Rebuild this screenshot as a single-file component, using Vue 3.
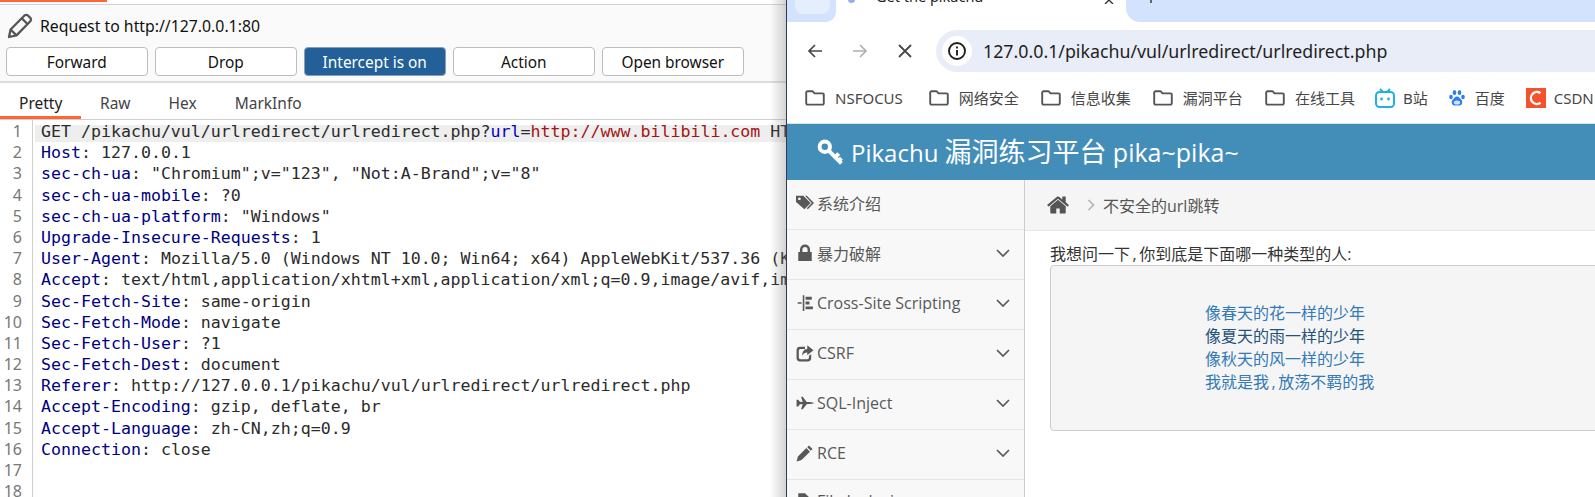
<script setup>
const buttons = [
  { label: 'Forward' },
  { label: 'Drop' },
  { label: 'Intercept is on', on: true },
  { label: 'Action' },
  { label: 'Open browser' }
]
const tabs = ['Pretty', 'Raw', 'Hex', 'MarkInfo']
const headers = [
  ['Host', '127.0.0.1'],
  ['sec-ch-ua', '"Chromium";v="123", "Not:A-Brand";v="8"'],
  ['sec-ch-ua-mobile', '?0'],
  ['sec-ch-ua-platform', '"Windows"'],
  ['Upgrade-Insecure-Requests', '1'],
  ['User-Agent', 'Mozilla/5.0 (Windows NT 10.0; Win64; x64) AppleWebKit/537.36 (KHTML, like Gecko) Chrome/123'],
  ['Accept', 'text/html,application/xhtml+xml,application/xml;q=0.9,image/avif,image/webp,image/apng'],
  ['Sec-Fetch-Site', 'same-origin'],
  ['Sec-Fetch-Mode', 'navigate'],
  ['Sec-Fetch-User', '?1'],
  ['Sec-Fetch-Dest', 'document'],
  ['Referer', 'http://127.0.0.1/pikachu/vul/urlredirect/urlredirect.php'],
  ['Accept-Encoding', 'gzip, deflate, br'],
  ['Accept-Language', 'zh-CN,zh;q=0.9'],
  ['Connection', 'close']
]
const folders = ['NSFOCUS', '网络安全', '信息收集', '漏洞平台', '在线工具']
const menu = [
  { label: '系统介绍', d: 'M0 1.5h6.5L13 8l-5.5 5.5L0 7zM3 3a1.2 1.2 0 1 0 .01 0zM8 1.5h1.6l6.4 6.5-5.5 5.5-.9-.9L14 8z', plain: true },
  { label: '暴力破解', d: 'M3.500 7V5a4.500 4.500 0 0 1 9 0v2h1.500v8H2V7zm2.200 0h4.600V5a2.300 2.300 0 0 0-4.600 0z' },
  { label: 'Cross-Site Scripting', d: 'M6 1h1.4v14H6zM8.500 2.500H14v2.600H8.500zM8.500 6.700H12v2.600H8.500zM8.500 11H15v2.600H8.500zM1.500 7.400H5v1.200H1.500z' },
  { label: 'CSRF', d: 'M3.500 2.500H8v2H4a1.500 1.500 0 0 0-1.500 1.500v6A1.500 1.500 0 0 0 4 13.500h6a1.500 1.500 0 0 0 1.500-1.500V10.500l2-1.500V12.500A3 3 0 0 1 10.500 15.500h-7A3 3 0 0 1 .5 12.500v-7a3 3 0 0 1 3-3zM10 1l5.500 4.500L10 10V7.500c-2 0-3.500.7-4.500 3 0-3.500 1.500-6 4.500-6z' },
  { label: 'SQL-Inject', d: 'M.5 5h1.500l1.500 1.800 2.500.2L4.500 2.500h1.500L9.500 7c3 0 6.500.5 6.500 1s-3.500 1-6.500 1L6 13.500H4.500L6 9l-2.500.2L2 11H.5z' },
  { label: 'RCE', d: 'M11.500 1.300l3.200 3.200-1.500 1.500L10 2.800zM9.200 3.600l3.200 3.200-7.500 7.500L.5 15.500l1.200-4.400z' },
  { label: 'File Inclusion', d: 'M2 1h6l4 4v10H2zM4 8h6v1.500H4zM4 11h6v1.500H4z' }
]
const links = [
  { label: '像春天的花一样的少年' },
  { label: '像夏天的雨一样的少年', hover: true },
  { label: '像秋天的风一样的少年' },
  { head: '我就是我', label: '放荡不羁的我' }
]
</script>

<template>
  <div class="screen">
    <section class="burp">
      <div class="top-strip"><span class="top-accent"></span></div>
      <div class="toolbar">
        <div class="request-line">
          <svg class="edit-icon" viewBox="0 0 26 26" fill="none" stroke="#555" stroke-width="2.300" stroke-linejoin="round">
            <path d="M2 24l1.600-7.500L17.500 2.500a2.400 2.400 0 0 1 3.400 0l2.400 2.400a2.400 2.400 0 0 1 0 3.400L9.500 22.400z" />
            <path d="M15 5.500l5.500 5.500M3.600 16.500l5.900 5.900" />
          </svg>
          <span>Request to http://127.0.0.1:80</span>
        </div>
        <div class="buttons">
          <button v-for="b in buttons" :key="b.label" class="btn" :class="{ on: b.on }">{{ b.label }}</button>
        </div>
      </div>
      <nav class="tabs">
        <span v-for="(t, i) in tabs" :key="t" class="tab" :class="{ active: i === 0 }">{{ t }}</span>
      </nav>
      <div class="editor">
        <div class="gutter">
          <div v-for="n in 18" :key="n" class="num">{{ n }}</div>
        </div>
        <div class="code">
          <div class="row first">GET /pikachu/vul/urlredirect/urlredirect.php?<span class="param">url</span>=<span class="val">http://www.bilibili.com</span> HTTP/1.1</div>
          <div v-for="h in headers" :key="h[0]" class="row"><span class="hname">{{ h[0] }}</span>: {{ h[1] }}</div>
        </div>
      </div>
      <div class="edge-shadow"></div>
    </section>

    <section class="browser">
      <div class="tabstrip">
        <div class="strip-left"><span class="new-btn"></span></div>
        <div class="page-tab">
          <span class="fav"></span>
          <span class="tab-title">Get the pikachu</span>
          <svg class="tab-x" viewBox="0 0 10 4" stroke="#333" stroke-width="1.400"><path d="M1 -4l8 8M9 -4l-8 8" /></svg>
        </div>
        <div class="strip-right"><span class="plus"></span></div>
      </div>
      <div class="navbar">
        <svg class="nav-ic first-ic" viewBox="0 0 16 16" fill="none" stroke="#474747" stroke-width="1.700"><path d="M15 8H2M8 2L2 8l6 6" /></svg>
        <svg class="nav-ic" viewBox="0 0 16 16" fill="none" stroke="#b0b0b0" stroke-width="1.700"><path d="M1 8h13M8 2l6 6-6 6" /></svg>
        <svg class="nav-ic" viewBox="0 0 16 16" fill="none" stroke="#474747" stroke-width="1.800"><path d="M2 2l12 12M14 2L2 14" /></svg>
        <div class="omnibox">
          <span class="info">
            <svg viewBox="0 0 20 20" width="20" height="20" fill="none" stroke="#1f1f1f" stroke-width="1.900"><circle cx="10" cy="10" r="8" /><path d="M10 9v5.500M10 5.400v2" /></svg>
          </span>
          <span class="url">127.0.0.1/pikachu/vul/urlredirect/urlredirect.php</span>
        </div>
      </div>
      <div class="bookmarks">
        <span v-for="f in folders" :key="f" class="bm">
          <svg class="folder" viewBox="0 0 20 16" fill="none" stroke="#555" stroke-width="1.900" stroke-linejoin="round"><path d="M1.200 2.500a1.300 1.300 0 0 1 1.300-1.300h5l2 2.200h8a1.300 1.300 0 0 1 1.300 1.300v8.600a1.300 1.300 0 0 1-1.300 1.300h-15a1.300 1.300 0 0 1-1.300-1.300z" /></svg>
          <span>{{ f }}</span>
        </span>
        <span class="bm site bili">
          <svg viewBox="0 0 20 20" width="20" height="20"><rect x="1" y="4" width="18" height="15" rx="3.500" fill="none" stroke="#20b0e3" stroke-width="2" /><path d="M5 1l3 3M15 1l-3 3" stroke="#20b0e3" stroke-width="2" /><circle cx="6.500" cy="11" r="1.400" fill="#20b0e3" /><circle cx="13.500" cy="11" r="1.400" fill="#20b0e3" /></svg>
          <span>B站</span>
        </span>
        <span class="bm site baidu">
          <svg viewBox="0 0 16 18" width="16" height="18" fill="#2f7bf0"><ellipse cx="2" cy="8" rx="1.800" ry="2.300" /><ellipse cx="5.500" cy="3.500" rx="1.800" ry="2.500" /><ellipse cx="10.500" cy="3.500" rx="1.800" ry="2.500" /><ellipse cx="14" cy="8" rx="1.800" ry="2.300" /><path d="M8 7.500c2 0 3 2 4.500 3.500s1 5.500-2 5.500H5.500c-3 0-3.500-4-2-5.500S6 7.500 8 7.500z" /><ellipse cx="8" cy="13.500" rx="3.200" ry="2" fill="#cfe0fb" /></svg>
          <span>百度</span>
        </span>
        <span class="bm site csdn">
          <svg viewBox="0 0 20 20" width="20" height="20"><rect width="20" height="20" fill="#f4512c" /><path d="M14.500 5.200a6 6 0 1 0 0 9.600" fill="none" stroke="#fff" stroke-width="2.400" /></svg>
          <span>CSDN</span>
        </span>
      </div>
      <header class="site-head">
        <svg class="key-ic" viewBox="0 0 26 26" fill="none" stroke="#fff" stroke-width="3.800"><circle cx="7.500" cy="7.500" r="5" /><path d="M11.500 11.500l12 12M17.500 17.500l3.500-3.500M21 21l2.500-2.500" /></svg>
        <span class="head-text">Pikachu <span class="head-cjk">漏洞练习平台</span> <span class="head-tail">pika~pika~</span></span>
      </header>
      <div class="site-body">
        <aside class="side">
          <div v-for="m in menu" :key="m.label" class="item">
            <svg class="m-ic" viewBox="0 0 16 16" fill="#585858" fill-rule="evenodd"><path :d="m.d" /></svg>
            <span class="m-text">{{ m.label }}</span>
            <svg v-if="!m.plain" class="chev" viewBox="0 0 14 8" fill="none" stroke="#585858" stroke-width="1.700"><path d="M1 1l6 6 6-6" /></svg>
          </div>
        </aside>
        <main class="main">
          <div class="crumbs">
            <svg class="home" viewBox="0 0 1792 1792" fill="#555"><path d="M1472 992v480q0 26-19 45t-45 19h-384v-384h-256v384h-384q-26 0-45-19t-19-45v-480q0-1 .5-3t.5-3l575-474 575 474q1 2 1 6zm223-69l-62 74q-8 9-21 11h-3q-13 0-21-7l-692-577-692 577q-12 8-24 7-13-2-21-11l-62-74q-8-10-7-23.500t11-21.500l719-599q32-26 76-26t76 26l244 204v-195q0-14 9-23t23-9h192q14 0 23 9t9 23v408l219 182q10 8 11 21.500t-7 23.500z" /></svg>
            <svg class="sep" viewBox="0 0 8 14" fill="none" stroke="#b5b5b5" stroke-width="1.700"><path d="M1.500 2l5 5-5 5" /></svg>
            <span class="crumb-text">不安全的url跳转</span>
          </div>
          <div class="content">
            <p class="question">我想问一下<span class="comma">,</span>你到底是下面哪一种类型的人:</p>
            <div class="well">
              <a v-for="l in links" :key="l.label" class="link" :class="{ hover: l.hover }"><template v-if="l.head">{{ l.head }}<span class="comma">,</span></template>{{ l.label }}</a>
            </div>
          </div>
        </main>
      </div>
    </section>
  </div>
</template>

<style>
html, body { margin: 0; background: #fff; overflow: hidden; }
</style>

<style scoped>
.screen {
  display: flex;
  width: 1595px;
  height: 497px;
  overflow: hidden;
  font-family: "Open Sans", "Noto Sans CJK SC", sans-serif;
  background: #fff;
}
.burp {
  position: relative;
  flex: 0 0 786px;
  width: 786px;
  overflow: hidden;
  font-family: "Noto Sans", "Noto Sans CJK SC", sans-serif;
}
.top-strip { height: 4px; background: #fff; border-bottom: 1px solid #d2d2d2; }
.top-accent { display: block; width: 107px; height: 2px; background: #ff6633; }
.toolbar {
  height: 78px;
  box-sizing: border-box;
  background: #fafafa;
  border-bottom: 2px solid #dcdcdc;
}
.request-line {
  display: flex;
  align-items: center;
  height: 42px;
  padding-left: 7px;
  font-size: 15.800px;
  color: #111;
}
.edit-icon { width: 26px; height: 26px; margin-right: 7px; }
.buttons { display: flex; gap: 7.500px; padding-left: 6px; }
.btn {
  width: 141.500px;
  height: 29px;
  padding: 2px 0 0;
  border: 1px solid #bdbdbd;
  border-radius: 4px;
  background: #fff;
  color: #111;
  font: 15.400px "Noto Sans", sans-serif;
}
.btn.on { background: #236099; color: #fff; border-color: #8a9fb3; }
.tabs { display: flex; height: 36px; border-bottom: 1px solid #cfcfcf; }
.tab {
  box-sizing: border-box;
  height: 36px;
  padding: 9px 19px 0;
  font-size: 15.500px;
  color: #444;
}
.tab.active { width: 81px; color: #222; border-bottom: 3px solid #ff6633; }
.editor { display: flex; height: 378px; }
.gutter {
  flex: 0 0 33px;
  box-sizing: border-box;
  border-right: 1px solid #cfcfcf;
  padding: 1px 10px 0 0;
  text-align: right;
  font-size: 16px;
  color: #777;
}
.num { height: 21.200px; line-height: 21.200px; }
.code {
  flex: 1;
  min-width: 0;
  padding: 1px 0 0 2px;
  font: 16.600px/21.200px "DejaVu Sans Mono", monospace;
  color: #2b2b2b;
}
.row { height: 21.200px; padding-left: 6px; white-space: pre; }
.row.first { background: linear-gradient(#eee, #eee) 0 4px / 100% 21px no-repeat; }
.hname { color: #000080; }
.param { color: #0000c0; }
.val { color: #a31515; }
.edge-shadow {
  position: absolute;
  top: 0;
  right: 0;
  bottom: 0;
  width: 16px;
  background: linear-gradient(90deg, rgba(120, 120, 120, 0), rgba(120, 120, 120, 0.32));
}

.browser {
  flex: 0 0 809px;
  width: 809px;
  box-sizing: border-box;
  border-left: 1px solid #2f3a55;
  display: flex;
  flex-direction: column;
  overflow: hidden;
  background: #fff;
}
.tabstrip { display: flex; height: 22px; flex: none; background: #fff; }
.strip-left {
  flex: 0 0 49px;
  background: #d3e3fd;
  border-bottom-right-radius: 10px;
  position: relative;
}
.new-btn {
  position: absolute;
  left: 8px;
  top: -8px;
  width: 35px;
  height: 22px;
  border-radius: 8px;
  background: #e5eefd;
}
.page-tab { flex: 0 0 290px; position: relative; overflow: hidden; }
.fav { position: absolute; left: 12px; top: -4px; width: 7px; height: 7px; border-radius: 50%; background: #8fb0ea; }
.tab-title {
  position: absolute;
  left: 40px;
  top: -16px;
  font: 14.500px/24px "Noto Sans", sans-serif;
  color: #1f1f1f;
}
.tab-x { position: absolute; left: 268px; top: 0; width: 10px; height: 4px; }
.strip-right {
  flex: 1;
  background: #d3e3fd;
  border-bottom-left-radius: 14px;
  position: relative;
}
.plus { position: absolute; left: 24px; top: 0; width: 2px; height: 3px; background: #666; }
.navbar { display: flex; align-items: center; height: 50px; flex: none; padding-top: 8px; box-sizing: border-box; background: #fff; }
.nav-ic { width: 16px; height: 16px; margin-right: 29px; flex: none; }
.first-ic { margin-left: 20px; }
.omnibox {
  flex: 1;
  display: flex;
  align-items: center;
  height: 42px;
  margin-left: -6px;
  border-radius: 21px 0 0 21px;
  background: #e9edf7;
}
.info {
  display: flex;
  align-items: center;
  justify-content: center;
  width: 30px;
  height: 30px;
  margin-left: 6px;
  border-radius: 50%;
  background: #fff;
}
.url { margin-left: 11px; font: 17.800px "Noto Sans", sans-serif; color: #1f1f1f; white-space: nowrap; }
.bookmarks {
  display: flex;
  align-items: center;
  height: 52px;
  flex: none;
  padding-left: 18px;
  font: 15px "Noto Sans", "Noto Sans CJK SC", sans-serif;
  color: #474747;
  white-space: nowrap;
  box-sizing: border-box;
  border-bottom: 1px solid #d7e2ea;
}
.bm { display: inline-flex; align-items: center; margin-right: 22px; flex: none; }
.bm:first-child { margin-right: 26px; }
.folder { width: 20px; height: 16px; margin-right: 10px; flex: none; }
.site { margin-right: 21px; }
.site svg { margin-right: 8px; flex: none; }
.bili { margin-left: -2px; }
.baidu svg { margin-right: 10px; }
.site-head {
  display: flex;
  align-items: center;
  height: 56px;
  flex: none;
  padding-left: 30px;
  background: #438eb9;
  color: #fff;
  font: 24px "Open Sans", "Noto Sans CJK SC", sans-serif;
  white-space: nowrap;
}
.head-text { margin-bottom: 3px; }
.head-cjk { font-size: 27px; }
.head-tail { font-size: 25px; }
.key-ic { width: 27px; height: 27px; margin-right: 7px; }
.site-body { display: flex; flex: 1; min-height: 0; }
.side {
  flex: 0 0 238px;
  box-sizing: border-box;
  background: #f8f8f8;
  border-right: 1px solid #ccc;
}
.item {
  display: flex;
  align-items: center;
  box-sizing: border-box;
  height: 50px;
  padding: 0 14px 3px 9px;
  border-bottom: 1px solid #e5e5e5;
  color: #585858;
  font-size: 16px;
}
.item:last-child { padding-bottom: 7px; }
.m-ic { width: 18px; height: 18px; margin-right: 3px; flex: none; }
.m-text { flex: 1; white-space: nowrap; }
.chev { width: 14px; height: 8px; flex: none; }
.main { flex: 1; min-width: 0; }
.crumbs {
  display: flex;
  align-items: center;
  box-sizing: border-box;
  height: 51px;
  padding-left: 21px;
  background: #f5f5f5;
  border-bottom: 1px solid #e5e5e5;
  color: #555;
  font-size: 16px;
}
.home { width: 24px; height: 24px; margin-right: 17px; }
.sep { width: 8px; height: 14px; margin-right: 8px; }
.content { padding-left: 25px; }
.question {
  margin: 13px 0 1px;
  height: 20px;
  font-size: 16px;
  line-height: 20px;
  color: #333;
  white-space: nowrap;
}
.comma { margin: 0 2.500px; }
.well {
  box-sizing: border-box;
  height: 166px;
  margin-right: -10px;
  padding: 36px 0 0 154px;
  border: 1px solid #ccc;
  border-radius: 4px;
  background: #f5f5f5;
}
.link { display: block; font-size: 16px; line-height: 23px; color: #337ab7; }
.link.hover { color: #23527c; }
</style>
